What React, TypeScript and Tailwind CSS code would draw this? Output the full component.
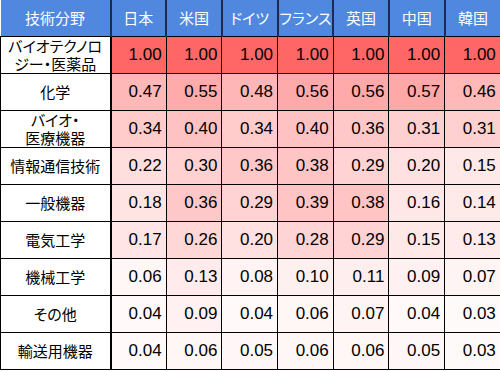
import React from "react";

const headers = ["日本", "米国", "ドイツ", "フランス", "英国", "中国", "韓国"];

const rows: { label: React.ReactNode; values: number[] }[] = [
  { label: <>バイオテクノロ<br />ジー・医薬品</>, values: [1, 1, 1, 1, 1, 1, 1] },
  { label: "化学", values: [0.47, 0.55, 0.48, 0.56, 0.56, 0.57, 0.46] },
  { label: <>バイオ・<br />医療機器</>, values: [0.34, 0.4, 0.34, 0.4, 0.36, 0.31, 0.31] },
  { label: "情報通信技術", values: [0.22, 0.3, 0.36, 0.38, 0.29, 0.2, 0.15] },
  { label: "一般機器", values: [0.18, 0.36, 0.29, 0.39, 0.38, 0.16, 0.14] },
  { label: "電気工学", values: [0.17, 0.26, 0.2, 0.28, 0.29, 0.15, 0.13] },
  { label: "機械工学", values: [0.06, 0.13, 0.08, 0.1, 0.11, 0.09, 0.07] },
  { label: "その他", values: [0.04, 0.09, 0.04, 0.06, 0.07, 0.04, 0.03] },
  { label: "輸送用機器", values: [0.04, 0.06, 0.05, 0.06, 0.06, 0.05, 0.03] },
];

function bg(v: number) {
  const g = Math.round(255 - v * 152);
  return `rgb(255, ${g}, ${g})`;
}

export default function App() {
  return (
    <div className="w-[500px] h-[371px] bg-white overflow-hidden">
      <table className="table-fixed border-collapse w-[500px] font-['Noto_Sans_CJK_JP',sans-serif] [font-feature-settings:'palt'] text-black">
        <colgroup>
          <col className="w-[110px]" />
          {headers.map((h) => (
            <col key={h} className="w-[55.7px]" />
          ))}
        </colgroup>
        <thead>
          <tr className="h-[36px] bg-[#4f88de]">
            <th className="font-normal text-white text-[15px] text-center border-r-2 border-r-[#1c2c4c] p-0">技術分野</th>
            {headers.map((h, i) => (
              <th
                key={h}
                className={`font-normal text-white text-[15px] text-center p-0 whitespace-nowrap ${i < headers.length - 1 ? "border-r-2 border-r-[#1c2c4c]" : ""}`}
              >
                {h}
              </th>
            ))}
          </tr>
        </thead>
        <tbody>
          {rows.map((r, ri) => (
            <tr key={ri} className="h-[37px]">
              <td className="border border-black border-r-2 text-center text-[15px] leading-[18px] p-0">
                {r.label}
              </td>
              {r.values.map((v, i) => (
                <td
                  key={i}
                  className="border border-black text-right pr-[4px] p-0 font-['Liberation_Sans',sans-serif] text-[17px]"
                  style={{ backgroundColor: bg(v) }}
                >
                  {v.toFixed(2)}
                </td>
              ))}
            </tr>
          ))}
        </tbody>
      </table>
    </div>
  );
}
